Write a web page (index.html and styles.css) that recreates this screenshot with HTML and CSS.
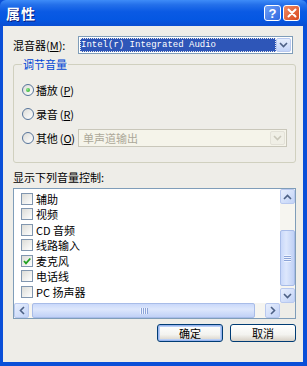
FILE: index.html
```html
<!DOCTYPE html>
<html>
<head>
<meta charset="utf-8">
<link rel="stylesheet" href="styles.css">
</head>
<body>
<div class="window">
  <div class="titlebar">
    <span class="title">属性</span>
    <div class="caption-btns">
      <span class="cap-btn help">?</span>
      <span class="cap-btn close"><svg width="10" height="10" viewBox="0 0 10 10"><path d="M1.5 1.5 L8.5 8.5 M8.5 1.5 L1.5 8.5" stroke="#fff" stroke-width="2" stroke-linecap="round"/></svg></span>
    </div>
  </div>
  <div class="client">
    <div class="mixer-row">
      <span class="mixer-label">混音器(<u>M</u>):</span>
      <div class="combo mixer-combo">
        <div class="combo-value"><span class="sel">Intel(r) Integrated Audio</span></div>
        <div class="combo-arrow"><svg width="9" height="6" viewBox="0 0 9 6"><path d="M1 1 L4.5 4.5 L8 1" fill="none" stroke="#4D6185" stroke-width="1.6"/></svg></div>
      </div>
    </div>

    <fieldset class="group">
      <legend>调节音量</legend>
      <div class="radio-row"><span class="radio checked"></span><span class="radio-label">播放 (<u>P</u>)</span></div>
      <div class="radio-row"><span class="radio"></span><span class="radio-label">录音 (<u>R</u>)</span></div>
      <div class="radio-row"><span class="radio"></span><span class="radio-label">其他 (<u>O</u>)</span>
        <div class="combo disabled">
          <div class="combo-value">单声道输出</div>
          <div class="combo-arrow"><svg width="9" height="6" viewBox="0 0 9 6"><path d="M1 1 L4.5 4.5 L8 1" fill="none" stroke="#C9C7BA" stroke-width="1.6"/></svg></div>
        </div>
      </div>
    </fieldset>

    <div class="list-label">显示下列音量控制:</div>
    <div class="listbox">
      <div class="items">
        <div class="item"><span class="check"></span>辅助</div>
        <div class="item"><span class="check"></span>视频</div>
        <div class="item"><span class="check"></span>CD 音频</div>
        <div class="item"><span class="check"></span>线路输入</div>
        <div class="item"><span class="check checked"><svg width="10" height="10" viewBox="0 0 10 10"><path d="M2 5 L4 7.3 L8.3 2.5" fill="none" stroke="#21A121" stroke-width="1.8"/></svg></span>麦克风</div>
        <div class="item"><span class="check"></span>电话线</div>
        <div class="item"><span class="check"></span>PC 扬声器</div>
      </div>
      <div class="vscroll">
        <div class="sb-btn"><svg width="9" height="6" viewBox="0 0 9 6"><path d="M1 5 L4.5 1.5 L8 5" fill="none" stroke="#4D6185" stroke-width="1.6"/></svg></div>
        <div class="v-track"></div>
        <div class="v-thumb"><span class="grip-h"></span></div>
        <div class="v-gap"></div>
        <div class="sb-btn"><svg width="9" height="6" viewBox="0 0 9 6"><path d="M1 1 L4.5 4.5 L8 1" fill="none" stroke="#4D6185" stroke-width="1.6"/></svg></div>
      </div>
      <div class="hscroll">
        <div class="sb-btn"><svg width="6" height="9" viewBox="0 0 6 9"><path d="M5 1 L1.5 4.5 L5 8" fill="none" stroke="#4D6185" stroke-width="1.6"/></svg></div>
        <div class="h-thumb"><span class="grip-v"></span></div>
        <div class="sb-btn"><svg width="6" height="9" viewBox="0 0 6 9"><path d="M1 1 L4.5 4.5 L1 8" fill="none" stroke="#4D6185" stroke-width="1.6"/></svg></div>
      </div>
      <div class="corner"></div>
    </div>

    <div class="buttons">
      <button class="btn default">确定</button>
      <button class="btn">取消</button>
    </div>
  </div>
</div>
</body>
</html>
```
FILE: styles.css
```css
* { box-sizing: border-box; }
html, body { margin: 0; padding: 0; }
body {
  width: 307px;
  height: 366px;
  overflow: hidden;
  font-family: "Noto Sans CJK SC", "Liberation Sans", sans-serif;
  font-size: 11px;
  color: #000;
}
u { text-decoration: underline; }

.window {
  width: 307px;
  height: 366px;
  background: #0A4FD8;
  display: flex;
  flex-direction: column;
  padding: 0 4px 4px 3px;
}

.titlebar {
  height: 26px;
  margin: 0 -4px 0 -3px;
  background: linear-gradient(#3E8CF8 0%, #2470EA 18%, #0A5AE4 45%, #0557E2 75%, #0A4DD2 100%);
  border-radius: 6px 6px 0 0;
  display: flex;
  align-items: center;
  padding: 0 6px 0 6px;
}
.title {
  color: #fff;
  font-weight: bold;
  font-size: 14px;
  line-height: 16px;
  text-shadow: 1px 1px 0 #0A1E80;
  letter-spacing: 1px;
  flex: 1;
}
.caption-btns {
  display: flex;
  gap: 2px;
  margin-right: 1px;
}
.cap-btn {
  width: 17px;
  height: 16px;
  border: 1px solid #fff;
  border-radius: 3px;
  display: flex;
  align-items: center;
  justify-content: center;
}
.help {
  background: linear-gradient(135deg, #6FA0F6, #2F67E0);
  color: #fff;
  font-family: "Liberation Sans", sans-serif;
  font-weight: bold;
  font-size: 13px;
  line-height: 13px;
}
.close {
  background: linear-gradient(135deg, #F08A62, #D8471E);
}

.client {
  flex: 1;
  background: #EEEDE8;
  padding: 10px 7px 0 10px;
  display: flex;
  flex-direction: column;
}

.mixer-row {
  display: flex;
  align-items: center;
  height: 18px;
}
.mixer-label {
  width: 65px;
  line-height: 14px;
}

.combo {
  display: flex;
  height: 18px;
  border: 1px solid #7F9DB9;
  background: #fff;
  padding: 1px;
}
.mixer-combo { width: 215px; }
.combo-value {
  flex: 1;
  display: flex;
  align-items: center;
  overflow: hidden;
  white-space: nowrap;
}
.sel {
  flex: 1;
  height: 14px;
  background: #2E56B8;
  color: #fff;
  font-family: "Liberation Mono", monospace;
  font-size: 9px;
  line-height: 14px;
  padding-left: 1px;
  outline: 1px dotted #E8E8E8;
  outline-offset: -1px;
}
.combo-arrow {
  width: 15px;
  border: 1px solid #B9C9EF;
  border-radius: 2px;
  background: linear-gradient(#E6EEFC, #C4D5F8);
  display: flex;
  align-items: center;
  justify-content: center;
}

.group {
  margin: 4px 0 0 0;
  width: 283px;
  border: 1px solid #D0D0BF;
  border-radius: 3px;
  padding: 9px 8px 15px 8px;
  display: flex;
  flex-direction: column;
  gap: 5px;
}
.group legend {
  color: #0046D5;
  line-height: 13px;
  padding: 0 1px;
  margin-left: 0;
}
.radio-row {
  display: flex;
  align-items: center;
  height: 19px;
}
.radio {
  width: 12px;
  height: 12px;
  border-radius: 50%;
  border: 1px solid #56749A;
  background: linear-gradient(135deg, #DCDCD7, #FFFFFF);
  margin-right: 2px;
  display: flex;
  align-items: center;
  justify-content: center;
}
.radio.checked::after {
  content: "";
  width: 4px;
  height: 4px;
  border-radius: 50%;
  background: radial-gradient(circle at 35% 35%, #8AE888, #21A121);
}
.radio-label {
  width: 42px;
  line-height: 14px;
  white-space: nowrap;
  letter-spacing: -0.2px;
}
.combo.disabled {
  flex: 1;
  border-color: #C9C7BA;
  background: #F5F4EA;
}
.combo.disabled .combo-value {
  color: #ACA899;
  padding-left: 3px;
}
.combo.disabled .combo-arrow {
  border-color: #E3E1D8;
  background: #F0EFE6;
}

.list-label {
  margin-top: 8px;
  line-height: 13px;
}
.listbox {
  margin-top: 4px;
  width: 283px;
  height: 131px;
  border: 1px solid #7F9DB9;
  background: #fff;
  display: grid;
  grid-template-columns: 1fr 15px;
  grid-template-rows: 1fr 15px;
}
.items {
  padding: 2px 0 0 7px;
  overflow: hidden;
}
.item {
  height: 15.5px;
  display: flex;
  align-items: center;
  line-height: 14px;
  white-space: nowrap;
}
.check {
  width: 12px;
  height: 12px;
  border: 1px solid #8196AF;
  background: linear-gradient(135deg, #DCDCD7, #FFFFFF);
  margin-right: 3px;
  display: flex;
  align-items: center;
  justify-content: center;
  flex: none;
}

.vscroll {
  display: flex;
  flex-direction: column;
  background: #F6F5F0;
}
.sb-btn {
  width: 15px;
  height: 15px;
  flex: none;
  border: 1px solid #B9C9EF;
  border-radius: 2px;
  background: linear-gradient(135deg, #E8EFFD, #C2D3F7);
  display: flex;
  align-items: center;
  justify-content: center;
}
.v-track { height: 26px; flex: none; }
.v-thumb {
  height: 56px;
  flex: none;
  border: 1px solid #A8BCE8;
  border-radius: 2px;
  background: linear-gradient(90deg, #C9D8FA, #DDE7FC 40%, #C0D1F6);
  display: flex;
  align-items: center;
  justify-content: center;
}
.v-gap { flex: 1; }
.grip-h {
  width: 7px;
  height: 7px;
  background: repeating-linear-gradient(#EEF3FE 0 1px, #8CA4D8 1px 2px);
}
.hscroll {
  display: flex;
  align-items: stretch;
  background: #F6F5F0;
  gap: 1px;
}
.h-thumb {
  width: 223px;
  margin-left: 2px;
  margin-right: 9px;
  border: 1px solid #A8BCE8;
  border-radius: 2px;
  background: linear-gradient(#C9D8FA, #DDE7FC 40%, #C0D1F6);
  display: flex;
  align-items: center;
  justify-content: center;
}
.grip-v {
  width: 8px;
  height: 6px;
  background: repeating-linear-gradient(90deg, #EEF3FE 0 1px, #8CA4D8 1px 2px);
}
.corner { background: #EEEDE8; }

.buttons {
  margin-top: 5px;
  width: 283px;
  display: flex;
  justify-content: flex-end;
  gap: 7px;
}
.btn {
  width: 66px;
  height: 18px;
  padding: 0;
  font-family: "Noto Sans CJK SC", sans-serif;
  font-size: 11px;
  line-height: 14px;
  color: #000;
  border: 1px solid #003C74;
  border-radius: 3px;
  background: linear-gradient(#FFFFFF, #F3F3EF 60%, #D6D0C5);
}
.btn.default {
  box-shadow: inset 0 0 0 1px #98B4EE, inset 0 0 0 2px #B9CFF6;
}
```
